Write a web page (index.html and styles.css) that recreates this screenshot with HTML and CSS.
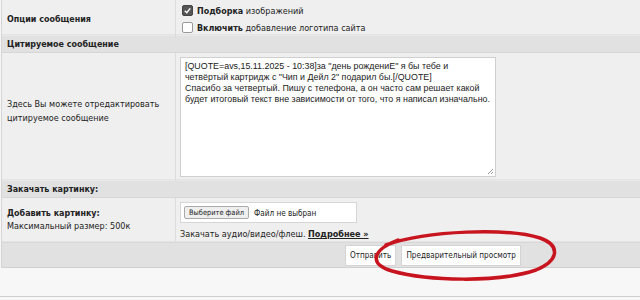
FILE: index.html
```html
<!DOCTYPE html>
<html lang="ru">
<head>
<meta charset="utf-8">
<link rel="stylesheet" href="styles.css">
</head>
<body>
<div class="page">
  <div class="form">
    <div class="row row-opts">
      <div class="cell-l"><div><b>Опции сообщения</b></div></div>
      <div class="cell-r opts">
        <label class="opt"><span class="cb checked"><svg viewBox="0 0 10 10" width="9" height="9"><path d="M2 5.2 L4.2 7.4 L8 2.6" fill="none" stroke="#fff" stroke-width="1.6"/></svg></span><b>Подборка</b>&nbsp;изображений</label>
        <label class="opt"><span class="cb"></span><b>Включить</b>&nbsp;добавление логотипа сайта</label>
      </div>
    </div>
    <div class="head">Цитируемое сообщение</div>
    <div class="row row-quote">
      <div class="cell-l quote-l"><div>Здесь Вы можете отредактировать<br>цитируемое сообщение</div></div>
      <div class="cell-r">
        <div class="textarea"><div class="tline">[QUOTE=avs,15.11.2025 - 10:38]за "день рождениЕ" я бы тебе и</div><div class="tline">четвёртый картридж с "Чип и Дейл 2" подарил бы.[/QUOTE]</div><div class="tline">Спасибо за четвертый. Пишу с телефона, а он часто сам решает какой</div><div class="tline">будет итоговый текст вне зависимости от того, что я написал изначально.</div><svg class="grip" viewBox="0 0 8 8" width="8" height="8"><path d="M7 2 L2 7 M7 5 L5 7" stroke="#999" stroke-width="1"/></svg></div>
      </div>
    </div>
    <div class="head">Закачать картинку:</div>
    <div class="row row-upload">
      <div class="cell-l"><div><b>Добавить картинку:</b><br>Максимальный размер: 500к</div></div>
      <div class="cell-r">
        <div class="file"><span class="file-btn">Выберите файл</span><span class="file-txt">Файл не выбран</span></div>
        <div class="more">Закачать аудио/видео/флеш. <a class="link">Подробнее »</a></div>
      </div>
    </div>
    <div class="actions">
      <span class="btn">Отправить</span>
      <span class="btn">Предварительный просмотр</span>
    </div>
  </div>
  <div class="after"></div>
  <svg class="circle" width="200" height="56" viewBox="0 0 200 56"><path d="M18 17 C60 2, 140 0, 172 10 C192 17, 192 32, 168 42 C130 55, 60 53, 24 43 C4 37, 0 24, 30 12" fill="none" stroke="#c8141e" stroke-width="3.5" stroke-linecap="round"/></svg>
</div>
</body>
</html>
```
FILE: styles.css
```css
* { box-sizing: border-box; }
html, body { margin: 0; padding: 0; }
body {
  width: 640px; height: 300px; overflow: hidden;
  background: #f7f7f7;
  font-family: "DejaVu Sans Condensed", "DejaVu Sans", Verdana, sans-serif;
  font-size: 9px; color: #222;
}
b { font-size: 8.9px; }
.page { position: relative; }
.form {
  margin-left: 1px;
  border-left: 1px solid #d4d4d4;
  background: #efefef;
}
.row {
  display: grid;
  grid-template-columns: 174px 1fr;
  border-bottom: 1px solid #e4e4e4;
}
.cell-l {
  padding: 0 5px;
  border-right: 1px solid #dcdcdc;
  display: flex; align-items: center;
  line-height: 13px;
}
.quote-l { padding-bottom: 12px; line-height: 14px; }
.cell-r { padding: 4px 4px; }
.row-opts { height: 35px; }
.opts { display: flex; flex-direction: column; gap: 4px; padding-top: 4px; padding-left: 6px; }
.opt { display: flex; align-items: center; height: 13px; }
.cb {
  width: 11px; height: 11px; border: 1px solid #999; border-radius: 2px;
  background: #fff; margin-right: 4px; display: inline-flex; align-items: center; justify-content: center;
}
.cb.checked { background: #555; border-color: #444; }
.head {
  height: 18px; background: #e1e1e1;
  border-bottom: 1px solid #d6d6d6; border-top: 1px solid #e8e8e8;
  padding: 0 5px; font-weight: bold; font-size: 8.9px; display: flex; align-items: center;
}
.row-quote { height: 127px; }
.row-quote .cell-r { padding: 4px 4px; }
.textarea {
  position: relative;
  width: 316px; height: 120px; background: #fff; border: 1px solid #cfcfcf;
  padding: 3px 2px 3px 4px;
  font-family: "Liberation Sans", Arial, sans-serif;
  font-size: 8.9px; color: #222;
}
.tline { white-space: nowrap; height: 11px; line-height: 11px; }
.grip { position: absolute; right: 1px; bottom: 1px; }
.row-upload { height: 44px; }
.row-upload .cell-r { padding: 4px 4px 0; }
.file {
  width: 177px; height: 21px; background: #fff; border: 1px solid #d6d6d6;
  display: flex; align-items: center; padding-left: 3px; font-size: 8.1px;
}
.file-btn {
  background: #efefef; border: 1px solid #aaa; border-radius: 2px; padding: 1px 4px; font-size: 7.4px;
  margin-right: 5px;
}
.more { margin-top: 6px; }
.link { font-weight: bold; text-decoration: underline; color: #222; }
.actions {
  height: 26px; background: #e1e1e1; border-top: 1px solid #d8d8d8; border-bottom: 1px solid #d0d0d0;
  display: flex; align-items: center; gap: 5px; padding-left: 343px;
}
.btn {
  height: 21px; background: #fff; border: 1px solid #d4d4d4; padding: 0 4px;
  display: inline-flex; align-items: center; font-size: 8.1px;
}
.after { height: 29px; border-bottom: 1px solid #cfcfcf; background: #f7f7f7; }
.circle { position: absolute; left: 368px; top: 228px; }
```
